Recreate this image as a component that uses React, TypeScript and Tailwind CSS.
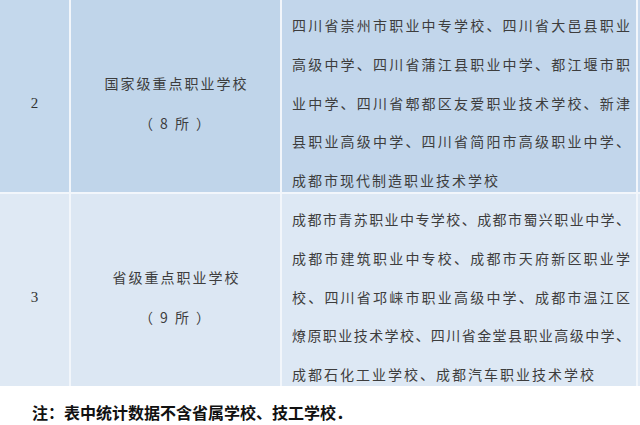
import React from "react";

const cjk = { fontFamily: '"Noto Sans CJK SC", "Noto Sans", sans-serif' };

function Cell3({ lines, last }: { lines: string[]; last: string }) {
  return (
    <div className="pl-[10px] pt-[6px] text-[14px] leading-[38.75px] text-[#3d3d3d]" style={cjk}>
      {lines.map((l, i) => (
        <div key={i} className="w-[338px] whitespace-nowrap text-justify [text-align-last:justify]">
          {l}
        </div>
      ))}
      <div className="tracking-[2px] whitespace-nowrap">{last}</div>
    </div>
  );
}

function Cell2({ title, count }: { title: string; count: string }) {
  return (
    <div
      className="h-full flex flex-col items-center justify-center pt-[14px] text-[14px] leading-[40px] tracking-[2px] text-[#3d3d3d]"
      style={cjk}
    >
      <div className="pl-[2px]">{title}</div>
      <div>{count}</div>
    </div>
  );
}

function Cell1({ n }: { n: string }) {
  return (
    <div className="h-full flex items-center justify-center pt-[14px] text-[15px] text-[#333] [font-family:'Liberation_Serif',serif]">
      {n}
    </div>
  );
}

export default function App() {
  return (
    <div className="w-[640px] h-[425px] bg-white overflow-hidden">
      <div className="flex">
        <div className="grid grid-cols-[69px_209px_354px] grid-rows-[192px_192px] gap-[2px] bg-[#f2f6fb] pr-[2px]">
          <div className="bg-[#c4d8ec]">
            <Cell1 n="2" />
          </div>
          <div className="bg-[#c0d5ea]">
            <Cell2 title="国家级重点职业学校" count="（ 8 所 ）" />
          </div>
          <div className="bg-[#c2d6eb]">
            <Cell3
              lines={[
                "四川省崇州市职业中专学校、四川省大邑县职业",
                "高级中学、四川省蒲江县职业中学、都江堰市职",
                "业中学、四川省郫都区友爱职业技术学校、新津",
                "县职业高级中学、四川省简阳市高级职业中学、",
              ]}
              last="成都市现代制造职业技术学校"
            />
          </div>
          <div className="bg-[#dfe9f4]">
            <Cell1 n="3" />
          </div>
          <div className="bg-[#dce7f3]">
            <Cell2 title="省级重点职业学校" count="（ 9 所 ）" />
          </div>
          <div className="bg-[#dde8f4]">
            <Cell3
              lines={[
                "成都市青苏职业中专学校、成都市蜀兴职业中学、",
                "成都市建筑职业中专校、成都市天府新区职业学",
                "校、四川省邛崃市职业高级中学、成都市温江区",
                "燎原职业技术学校、四川省金堂县职业高级中学、",
              ]}
              last="成都石化工业学校、成都汽车职业技术学校"
            />
          </div>
        </div>
        <div className="w-[2px] h-[386px] flex flex-col">
          <div className="h-[192px] bg-[#c8daee]" />
          <div className="h-[2px] bg-[#f2f6fb]" />
          <div className="h-[192px] bg-[#e0eaf5]" />
        </div>
      </div>
      <div className="mt-[14px] pl-[32px] text-[16px] leading-[24px] font-bold text-[#111]" style={cjk}>
        注：表中统计数据不含省属学校、技工学校．
      </div>
    </div>
  );
}
